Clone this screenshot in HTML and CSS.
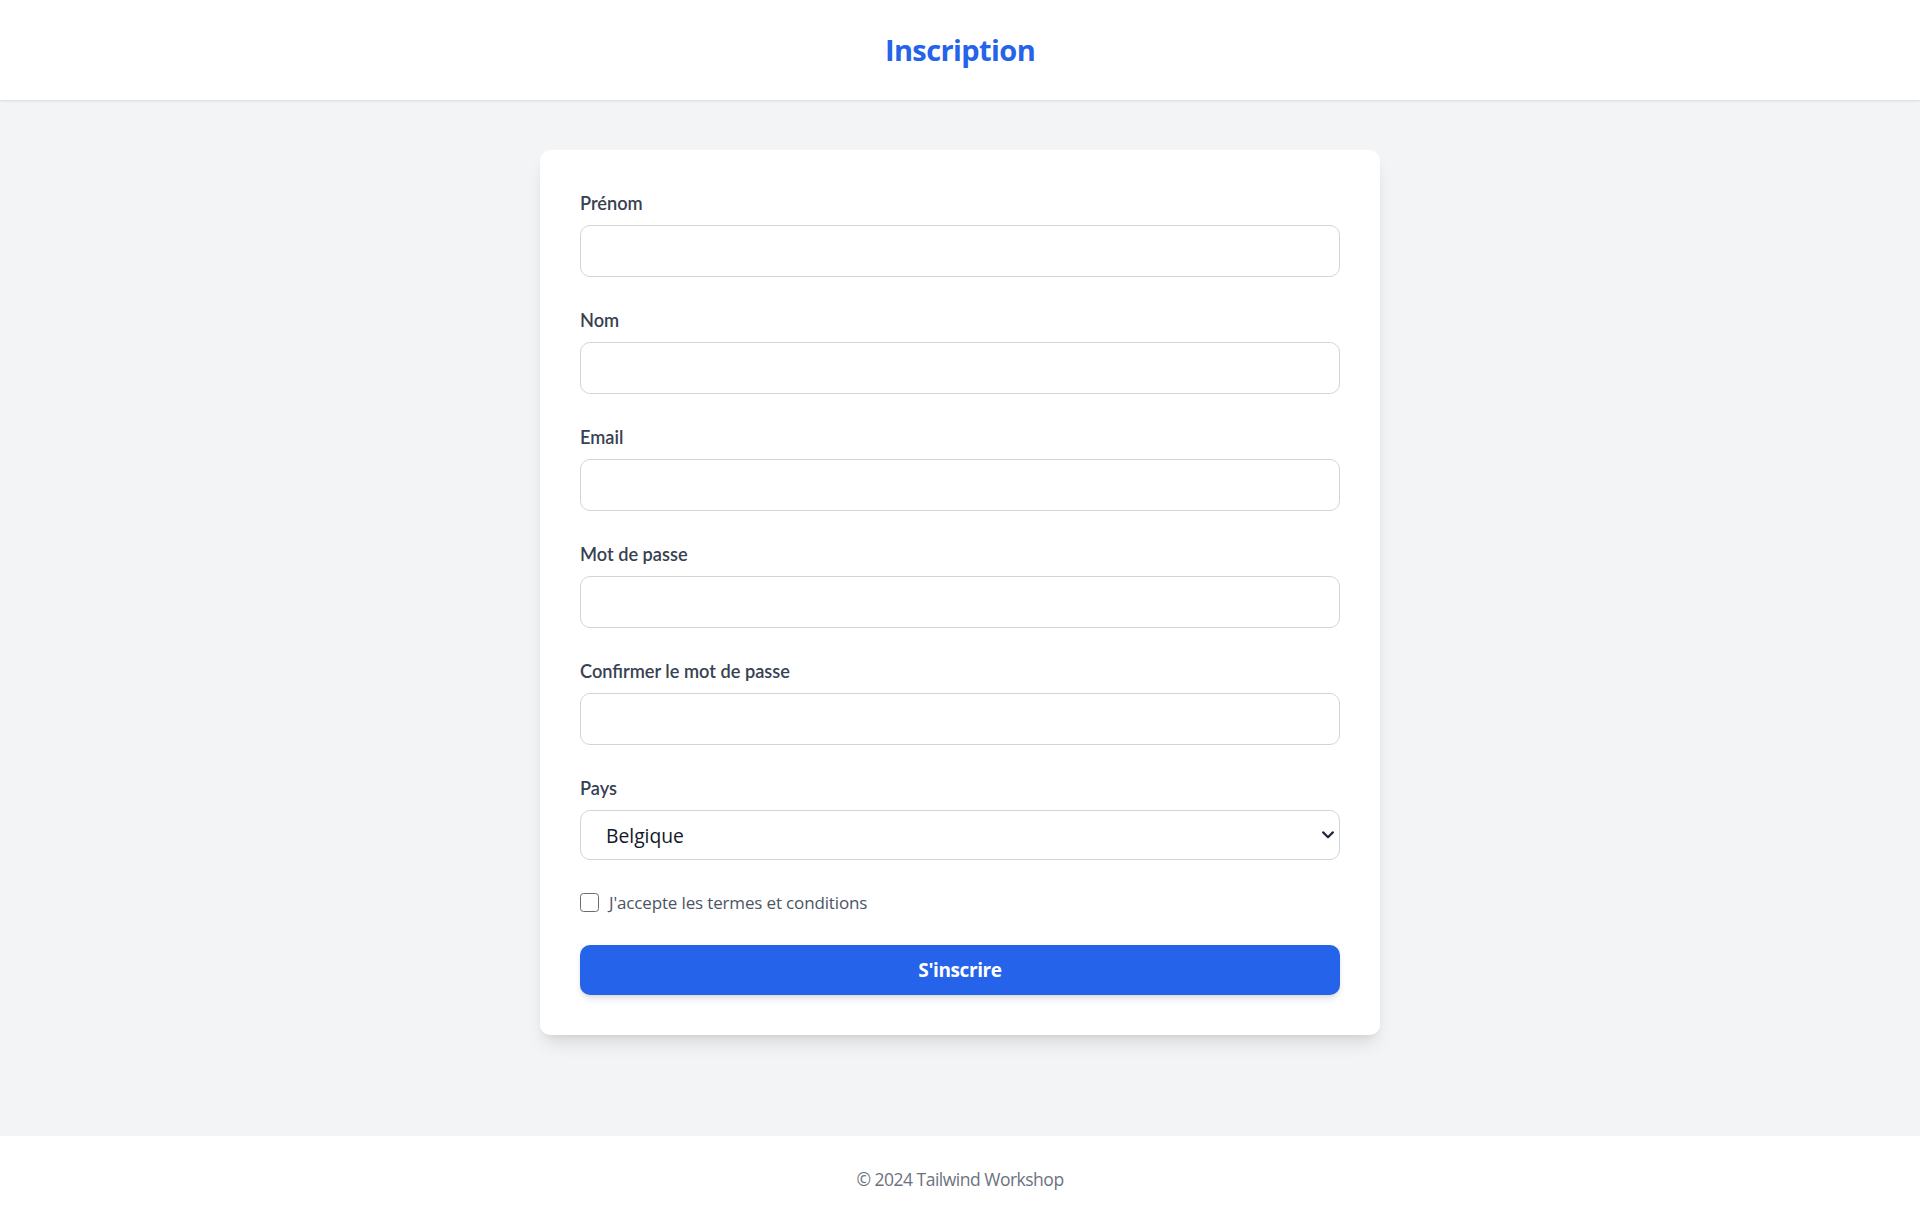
FILE: index.html
```html
<!DOCTYPE html>
<html lang="fr">
<head>
<meta charset="utf-8">
<title>Inscription</title>
<link rel="stylesheet" href="styles.css">
</head>
<body>
<header class="site-header">
  <h1 class="site-title">Inscription</h1>
</header>
<main class="main">
  <form class="card">
    <div class="field">
      <label class="field-label" for="prenom">Prénom</label>
      <input class="field-input" id="prenom" type="text">
    </div>
    <div class="field">
      <label class="field-label" for="nom">Nom</label>
      <input class="field-input" id="nom" type="text">
    </div>
    <div class="field">
      <label class="field-label" for="email">Email</label>
      <input class="field-input" id="email" type="email">
    </div>
    <div class="field">
      <label class="field-label" for="pwd">Mot de passe</label>
      <input class="field-input" id="pwd" type="password">
    </div>
    <div class="field">
      <label class="field-label" for="pwd2">Confirmer le mot de passe</label>
      <input class="field-input" id="pwd2" type="password">
    </div>
    <div class="field">
      <label class="field-label" for="pays">Pays</label>
      <div class="select-wrap">
        <select class="field-select" id="pays">
          <option>Belgique</option>
          <option>France</option>
          <option>Suisse</option>
          <option>Canada</option>
        </select>
        <svg class="select-chevron" width="12" height="8" viewBox="0 0 12 8" aria-hidden="true">
          <path d="M1.2 1.4 L6 6.2 L10.8 1.4" fill="none" stroke="#1f2937" stroke-width="2.2" stroke-linecap="round" stroke-linejoin="round"/>
        </svg>
      </div>
    </div>
    <div class="check-row">
      <input class="check-box" id="terms" type="checkbox">
      <label class="check-label" for="terms">J'accepte les termes et conditions</label>
    </div>
    <button class="submit-btn" type="submit">S'inscrire</button>
  </form>
</main>
<footer class="site-footer">
  <p class="footer-text">© 2024 Tailwind Workshop</p>
</footer>
</body>
</html>
```
FILE: styles.css
```css
* { box-sizing: border-box; }

html, body { margin: 0; padding: 0; }

body {
  min-height: 100vh;
  display: flex;
  flex-direction: column;
  background: #f3f4f6;
  font-family: "Open Sans", "Liberation Sans", sans-serif;
  color: #111827;
}

.site-header {
  background: #ffffff;
  height: 100px;
  display: flex;
  align-items: center;
  justify-content: center;
  box-shadow: 0 1px 3px rgba(0, 0, 0, 0.08), 0 1px 2px rgba(0, 0, 0, 0.04);
  position: relative;
  z-index: 1;
}

.site-title {
  margin: 0;
  font-family: "Open Sans", sans-serif;
  font-weight: 700;
  font-size: 29px;
  line-height: 40px;
  letter-spacing: -0.6px;
  color: #2563eb;
}

.main {
  flex: 1;
  display: flex;
  justify-content: center;
  align-items: flex-start;
  padding: 50px 0;
}

.card {
  width: 840px;
  background: #ffffff;
  border-radius: 10px;
  padding: 40px;
  box-shadow: 0 12px 18px -4px rgba(0, 0, 0, 0.1), 0 5px 8px -5px rgba(0, 0, 0, 0.1);
}

.field { margin-bottom: 30px; }

.field-label {
  display: block;
  font-family: Lato, sans-serif;
  font-weight: 600;
  font-size: 18.2px;
  line-height: 27px;
  color: #374151;
  margin-bottom: 8px;
}

.field-input {
  display: block;
  width: 100%;
  height: 52px;
  border: 1.25px solid #d1d5db;
  border-radius: 10px;
  background: #ffffff;
  padding: 0 15px;
  font-family: "Open Sans", sans-serif;
  font-size: 20px;
  outline: none;
}

.select-wrap { position: relative; }

.field-select {
  display: block;
  width: 100%;
  height: 50px;
  border: 1.25px solid #d1d5db;
  border-radius: 10px;
  background: #ffffff;
  padding: 0 30px 0 25px;
  font-family: "Open Sans", sans-serif;
  font-size: 19.3px;
  color: #111827;
  appearance: none;
  -webkit-appearance: none;
  outline: none;
}

.select-chevron {
  position: absolute;
  right: 6px;
  top: 21px;
  pointer-events: none;
}

.check-row {
  display: flex;
  align-items: center;
  gap: 10px;
  height: 25px;
  margin-bottom: 30px;
}

.check-box {
  appearance: none;
  -webkit-appearance: none;
  margin: 0;
  width: 19px;
  height: 19px;
  border: 1.5px solid #6b6b6b;
  border-radius: 3.5px;
  background: #ffffff;
  flex: none;
}

.check-label {
  font-family: "Open Sans", sans-serif;
  font-size: 17px;
  line-height: 25px;
  color: #4b5563;
  letter-spacing: -0.15px;
}

.submit-btn {
  display: block;
  width: 100%;
  height: 50px;
  border: none;
  border-radius: 10px;
  background: #2563eb;
  color: #ffffff;
  font-family: "Open Sans", sans-serif;
  font-weight: 700;
  font-size: 19px;
  letter-spacing: -0.4px;
  box-shadow: 0 5px 7px -1px rgba(0, 0, 0, 0.1), 0 2px 5px -2px rgba(0, 0, 0, 0.1);
  cursor: pointer;
}

.site-footer {
  background: #ffffff;
  height: 85px;
  display: flex;
  align-items: center;
  justify-content: center;
}

.footer-text {
  margin: 0;
  font-family: "Open Sans", sans-serif;
  font-size: 17.5px;
  line-height: 30px;
  color: #6b7280;
  letter-spacing: -0.5px;
}
```
